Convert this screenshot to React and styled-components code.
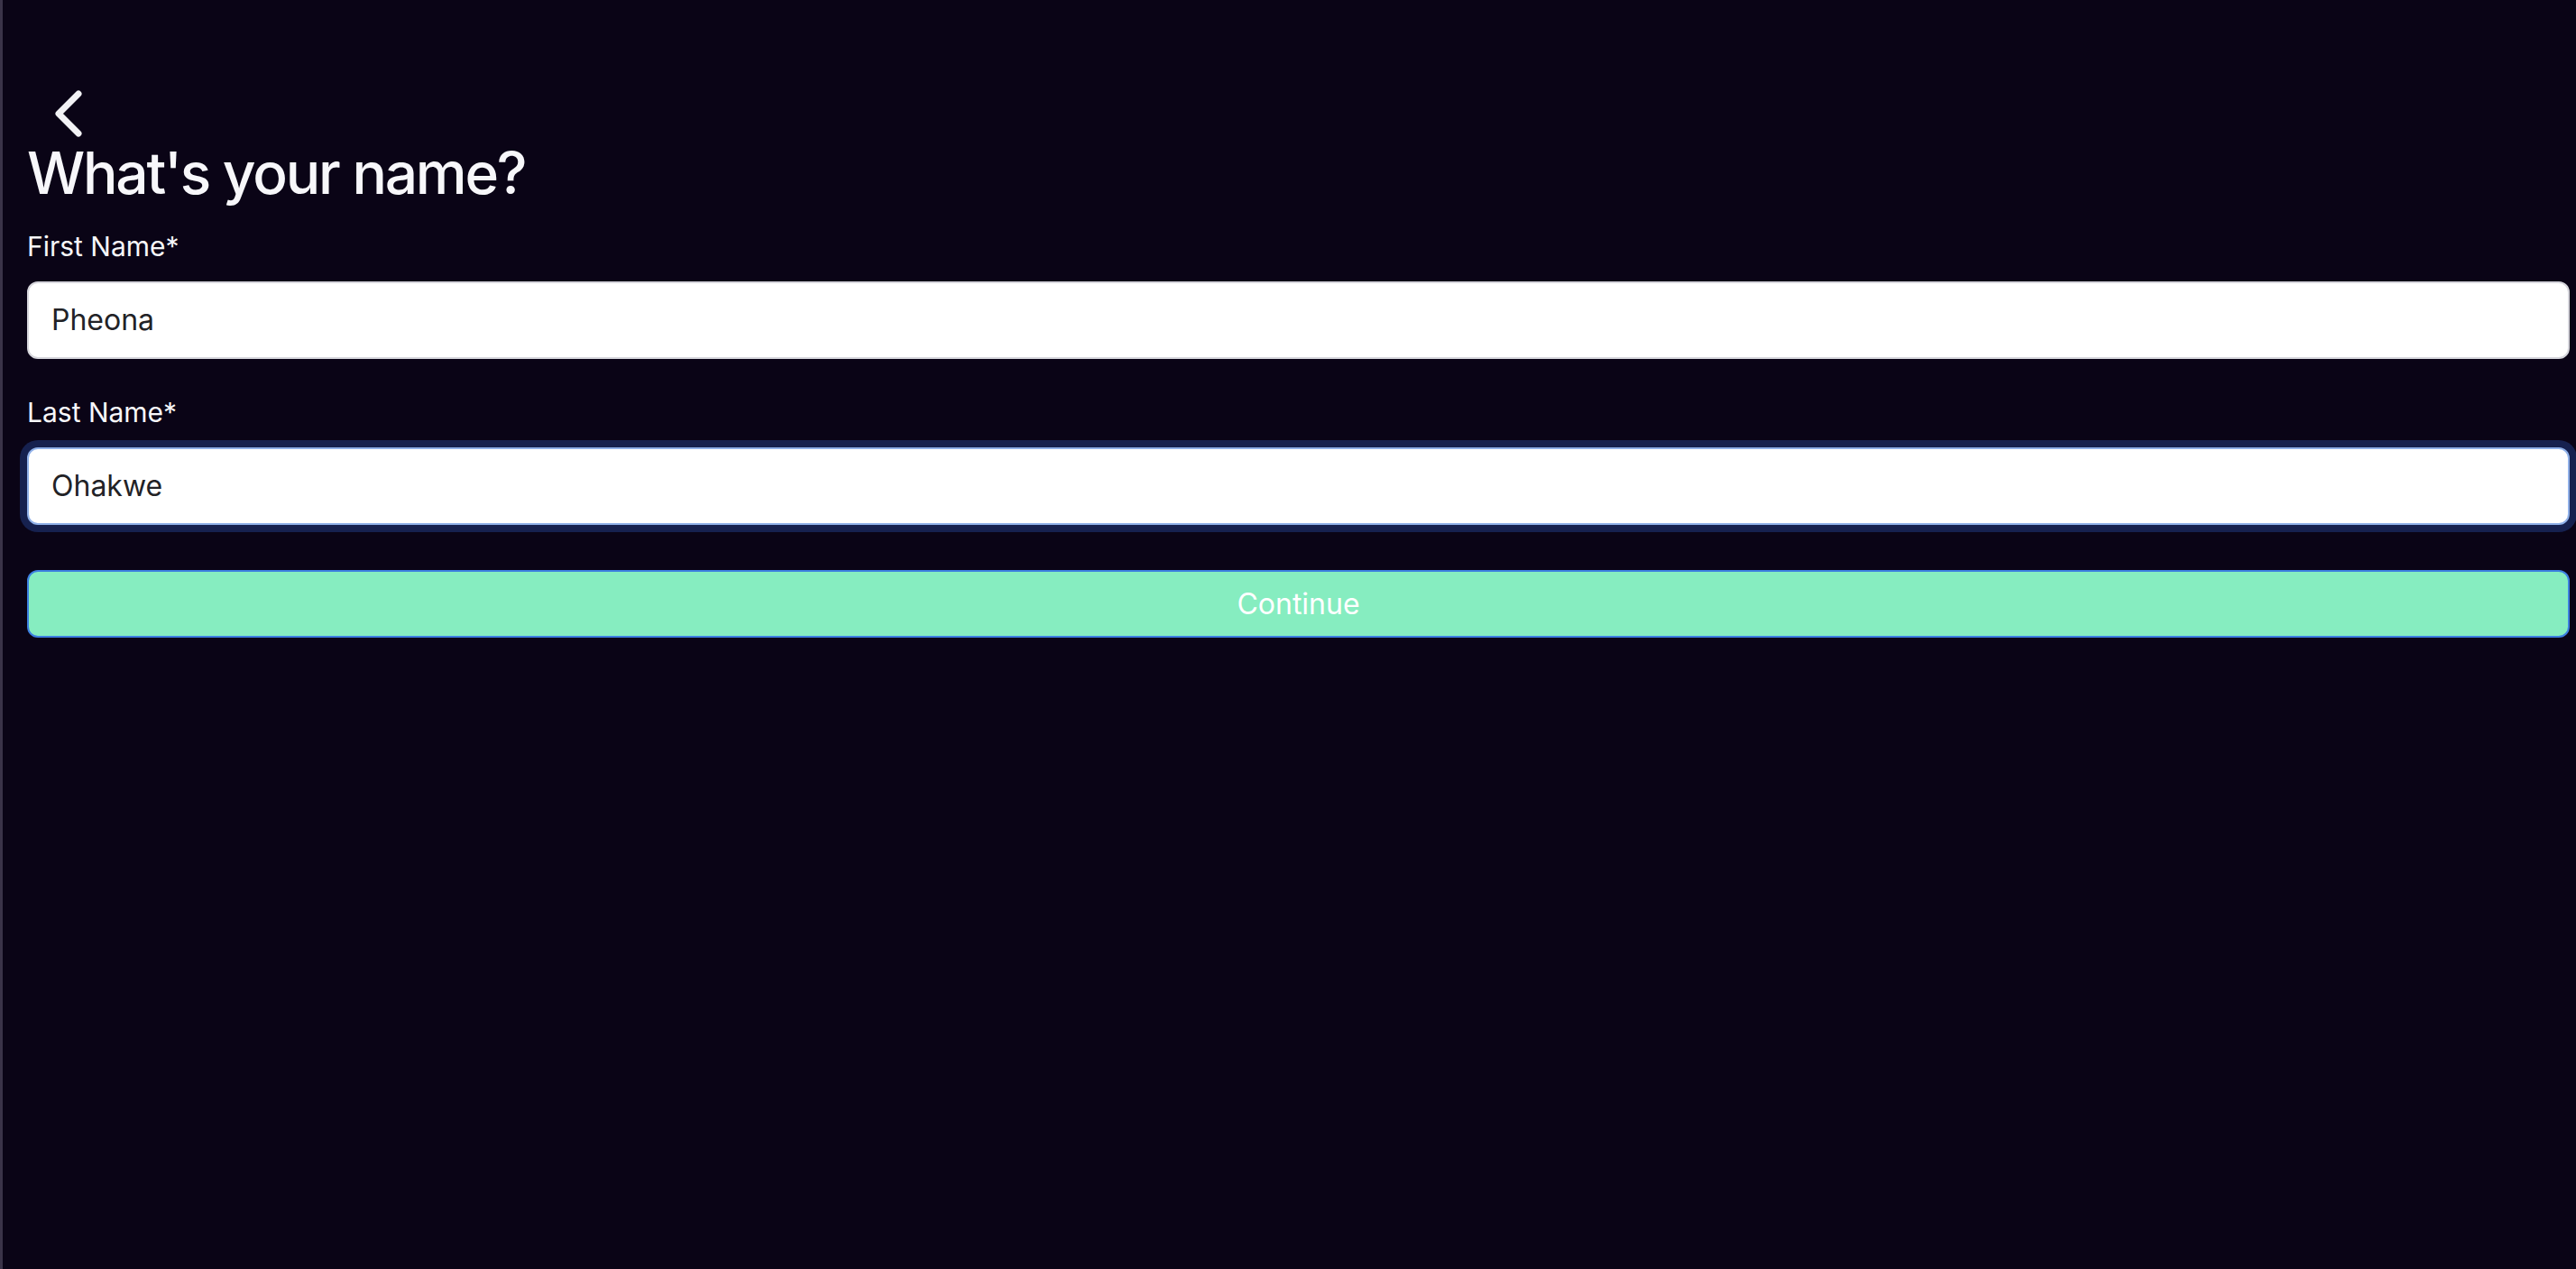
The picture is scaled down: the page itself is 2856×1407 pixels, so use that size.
import React from "react";
import styled, { createGlobalStyle } from "styled-components";

const Global = createGlobalStyle`
  html, body {
    margin: 0;
    padding: 0;
    background: #0a0416;
  }
  * { box-sizing: border-box; }
`;

const Page = styled.div`
  min-height: 100vh;
  background: #0a0416;
  border-left: 3px solid #3a3348;
  padding: 94px 7px 40px 27px;
  font-family: Inter, "Liberation Sans", sans-serif;
  color: #f5f5f8;
`;

const BackButton = styled.button`
  display: block;
  background: none;
  border: none;
  padding: 0;
  margin: 0 0 0 28px;
  width: 36px;
  height: 60px;
  cursor: pointer;
`;

const Title = styled.h1`
  margin: 0;
  font-size: 64px;
  line-height: 1.2;
  font-weight: 500;
  letter-spacing: -2.2px;
  color: #f7f7fa;
`;

const Form = styled.form`
  display: flex;
  flex-direction: column;
  margin-top: 24px;
`;

const Field = styled.div`
  display: flex;
  flex-direction: column;
  gap: 21px;
  margin-bottom: ${(p) => p.$gap}px;
`;

const Label = styled.label`
  font-size: 30px;
  line-height: 36px;
  font-weight: 400;
  color: #f7f7fa;
`;

const Input = styled.input`
  height: 86px;
  border-radius: 12px;
  background: #ffffff;
  border: 2px solid ${(p) => (p.$focused ? "#8fb0e8" : "#d6d6dc")};
  box-shadow: ${(p) => (p.$focused ? "0 0 0 8px #16214f" : "none")};
  padding: 0 25px;
  font-family: Inter, "Liberation Sans", sans-serif;
  font-size: 32px;
  color: #222226;
  outline: none;
`;

const Button = styled.button`
  height: 75px;
  border-radius: 12px;
  background: #86edc0;
  border: 2px solid #3c7fe0;
  color: #ffffff;
  font-family: Inter, "Liberation Sans", sans-serif;
  font-size: 32px;
  font-weight: 400;
  cursor: pointer;
`;

export default function App() {
  return (
    <>
      <Global />
      <Page>
        <BackButton aria-label="Back">
          <svg width="36" height="60" viewBox="0 0 36 60">
            <polyline
              points="29,10 7,32 29,54"
              fill="none"
              stroke="#f2f2f5"
              strokeWidth="7"
              strokeLinecap="round"
              strokeLinejoin="round"
            />
          </svg>
        </BackButton>
        <Title>What's your name?</Title>
        <Form onSubmit={(e) => e.preventDefault()}>
          <Field $gap={41}>
            <Label>First Name*</Label>
            <Input defaultValue="Pheona" />
          </Field>
          <Field $gap={50}>
            <Label>Last Name*</Label>
            <Input defaultValue="Ohakwe" $focused />
          </Field>
          <Button type="submit">Continue</Button>
        </Form>
      </Page>
    </>
  );
}
